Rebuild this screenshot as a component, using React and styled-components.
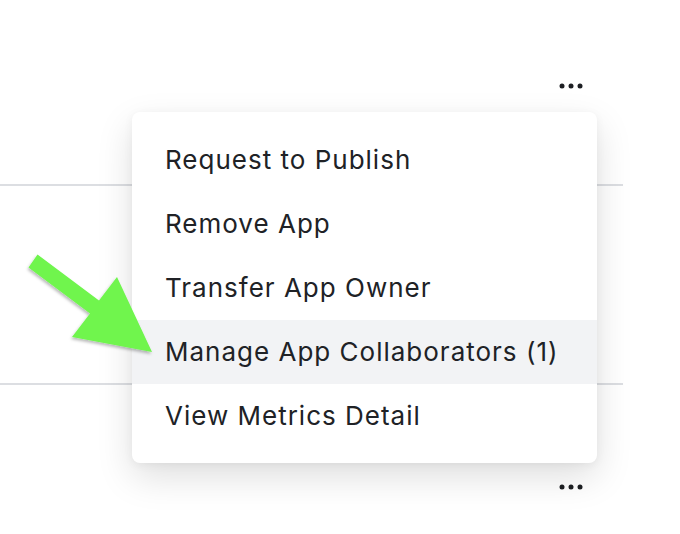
import React from 'react'
import styled, { createGlobalStyle } from 'styled-components'

const GlobalStyle = createGlobalStyle`
  html, body {
    margin: 0;
    padding: 0;
    background: #ffffff;
  }
  body {
    font-family: Inter, "Noto Sans", "Liberation Sans", sans-serif;
    color: #1d1f23;
    overflow: hidden;
  }
`

const menuItems = [
  'Request to Publish',
  'Remove App',
  'Transfer App Owner',
  'Manage App Collaborators (1)',
  'View Metrics Detail',
]

const MoreDots = () => (
  <svg width="24" height="6" viewBox="0 0 24 6">
    <circle cx="3" cy="3" r="2.5" fill="#1d1f23" />
    <circle cx="12" cy="3" r="2.5" fill="#1d1f23" />
    <circle cx="21" cy="3" r="2.5" fill="#1d1f23" />
  </svg>
)

const Arrow = () => (
  <ArrowSvg width="680" height="534" viewBox="0 0 680 534">
    <defs>
      <filter id="arrowShadow" x="-20%" y="-20%" width="140%" height="140%">
        <feDropShadow dx="-1" dy="2" stdDeviation="1.6" floodColor="#000" floodOpacity="0.28" />
      </filter>
    </defs>
    <polygon
      filter="url(#arrowShadow)"
      fill="#6ff54e"
      points="37.5,254.5 99,300.5 117,277 152,352 72,337 90,313.5 28.5,267.5"
    />
  </ArrowSvg>
)

const App = () => {
  const active = 3

  return (
    <Page>
      <GlobalStyle />
      <List>
        {[0, 1, 2].map(i => (
          <Row key={i} $last={i === 2}>
            <DotsButton>
              <MoreDots />
            </DotsButton>
          </Row>
        ))}
      </List>

      <Menu>
        {menuItems.map((item, i) => (
          <MenuItem key={item} $active={i === active}>{item}</MenuItem>
        ))}
      </Menu>

      <Arrow />
    </Page>
  )
}

const Page = styled.div`
  position: relative;
  width: 680px;
  height: 534px;
  overflow: hidden;
`

const List = styled.div`
  display: flex;
  flex-direction: column;
  width: 623px;
  margin-top: -13px;
`

const Row = styled.div`
  height: 197px;
  display: flex;
  align-items: center;
  justify-content: flex-end;
  padding-right: 40px;
  padding-top: ${p => (p.$last ? '3px' : '0')};
  border-bottom: ${p => (p.$last ? 'none' : '2px solid #dcdee2')};
`

const DotsButton = styled.button`
  display: flex;
  align-items: center;
  justify-content: center;
  background: none;
  border: none;
  padding: 0;
  cursor: pointer;
`

const Menu = styled.ul`
  position: absolute;
  top: 112px;
  left: 132px;
  width: 465px;
  margin: 0;
  padding: 16px 0 15px;
  list-style: none;
  background: #ffffff;
  border-radius: 8px;
  box-shadow: 0 14px 36px rgba(0, 0, 0, 0.13), 0 2px 10px rgba(0, 0, 0, 0.05);
`

const MenuItem = styled.li`
  height: 64px;
  line-height: 64px;
  padding-left: 33px;
  font-size: 26px;
  font-weight: 400;
  letter-spacing: 1px;
  color: #202226;
  background: ${p => (p.$active ? '#f2f3f5' : 'transparent')};
  white-space: nowrap;
`

const ArrowSvg = styled.svg`
  position: absolute;
  top: 0;
  left: 0;
  pointer-events: none;
`

export default App
